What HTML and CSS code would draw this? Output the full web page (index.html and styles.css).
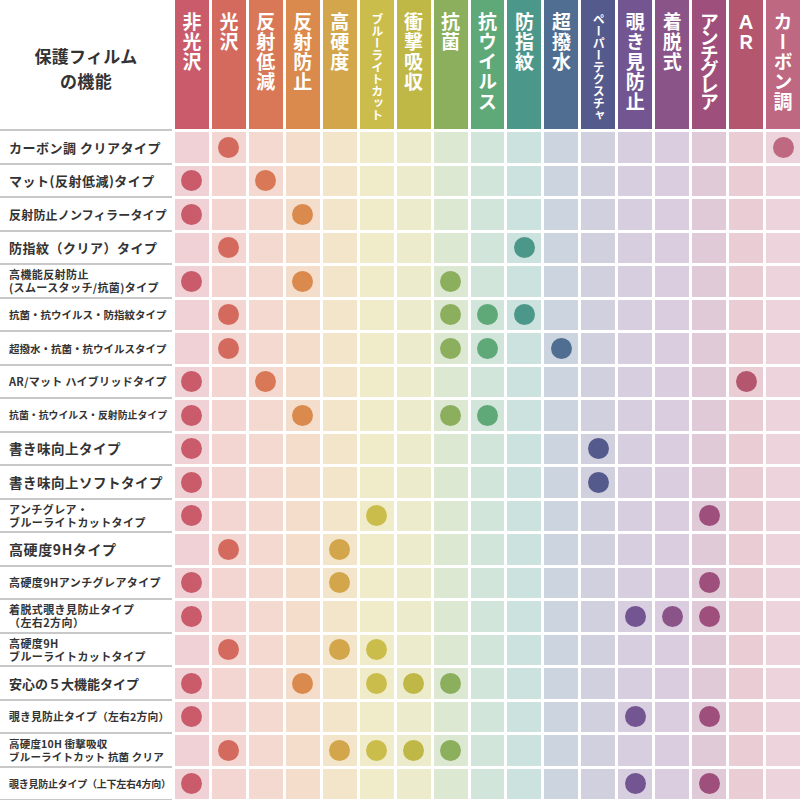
FILE: index.html
```html
<!DOCTYPE html>
<html lang="ja">
<head>
<meta charset="utf-8">
<title>保護フィルムの機能</title>
<link rel="stylesheet" href="styles.css">
</head>
<body>
<div class="chart">
  <div class="corner">保護フィルム<br>の機能</div>
  <div class="head c1"><span class="vt">非光沢</span></div>
  <div class="head c2"><span class="vt">光沢</span></div>
  <div class="head c3"><span class="vt">反射低減</span></div>
  <div class="head c4"><span class="vt">反射防止</span></div>
  <div class="head c5"><span class="vt">高硬度</span></div>
  <div class="head c6"><span class="vt small">ブルーライトカット</span></div>
  <div class="head c7"><span class="vt">衝撃吸収</span></div>
  <div class="head c8"><span class="vt">抗菌</span></div>
  <div class="head c9"><span class="vt">抗ウイルス</span></div>
  <div class="head c10"><span class="vt">防指紋</span></div>
  <div class="head c11"><span class="vt">超撥水</span></div>
  <div class="head c12"><span class="vt small">ペーパーテクスチャ</span></div>
  <div class="head c13"><span class="vt">覗き見防止</span></div>
  <div class="head c14"><span class="vt">着脱式</span></div>
  <div class="head c15"><span class="vt tight">アンチグレア</span></div>
  <div class="head c16"><span class="vt">ＡＲ</span></div>
  <div class="head c17"><span class="vt">カーボン調</span></div>

  <div class="label lg">カーボン調 クリアタイプ</div>
  <div class="cell c1"></div><div class="cell c2"><i class="dot"></i></div><div class="cell c3"></div><div class="cell c4"></div><div class="cell c5"></div><div class="cell c6"></div><div class="cell c7"></div><div class="cell c8"></div><div class="cell c9"></div><div class="cell c10"></div><div class="cell c11"></div><div class="cell c12"></div><div class="cell c13"></div><div class="cell c14"></div><div class="cell c15"></div><div class="cell c16"></div><div class="cell c17"><i class="dot"></i></div>

  <div class="label lg">マット(反射低減)タイプ</div>
  <div class="cell c1"><i class="dot"></i></div><div class="cell c2"></div><div class="cell c3"><i class="dot"></i></div><div class="cell c4"></div><div class="cell c5"></div><div class="cell c6"></div><div class="cell c7"></div><div class="cell c8"></div><div class="cell c9"></div><div class="cell c10"></div><div class="cell c11"></div><div class="cell c12"></div><div class="cell c13"></div><div class="cell c14"></div><div class="cell c15"></div><div class="cell c16"></div><div class="cell c17"></div>

  <div class="label md">反射防止ノンフィラータイプ</div>
  <div class="cell c1"><i class="dot"></i></div><div class="cell c2"></div><div class="cell c3"></div><div class="cell c4"><i class="dot"></i></div><div class="cell c5"></div><div class="cell c6"></div><div class="cell c7"></div><div class="cell c8"></div><div class="cell c9"></div><div class="cell c10"></div><div class="cell c11"></div><div class="cell c12"></div><div class="cell c13"></div><div class="cell c14"></div><div class="cell c15"></div><div class="cell c16"></div><div class="cell c17"></div>

  <div class="label lg">防指紋（クリア）タイプ</div>
  <div class="cell c1"></div><div class="cell c2"><i class="dot"></i></div><div class="cell c3"></div><div class="cell c4"></div><div class="cell c5"></div><div class="cell c6"></div><div class="cell c7"></div><div class="cell c8"></div><div class="cell c9"></div><div class="cell c10"><i class="dot"></i></div><div class="cell c11"></div><div class="cell c12"></div><div class="cell c13"></div><div class="cell c14"></div><div class="cell c15"></div><div class="cell c16"></div><div class="cell c17"></div>

  <div class="label sm">高機能反射防止<br>(スムースタッチ/抗菌)タイプ</div>
  <div class="cell c1"><i class="dot"></i></div><div class="cell c2"></div><div class="cell c3"></div><div class="cell c4"><i class="dot"></i></div><div class="cell c5"></div><div class="cell c6"></div><div class="cell c7"></div><div class="cell c8"><i class="dot"></i></div><div class="cell c9"></div><div class="cell c10"></div><div class="cell c11"></div><div class="cell c12"></div><div class="cell c13"></div><div class="cell c14"></div><div class="cell c15"></div><div class="cell c16"></div><div class="cell c17"></div>

  <div class="label xs">抗菌・抗ウイルス・防指紋タイプ</div>
  <div class="cell c1"></div><div class="cell c2"><i class="dot"></i></div><div class="cell c3"></div><div class="cell c4"></div><div class="cell c5"></div><div class="cell c6"></div><div class="cell c7"></div><div class="cell c8"><i class="dot"></i></div><div class="cell c9"><i class="dot"></i></div><div class="cell c10"><i class="dot"></i></div><div class="cell c11"></div><div class="cell c12"></div><div class="cell c13"></div><div class="cell c14"></div><div class="cell c15"></div><div class="cell c16"></div><div class="cell c17"></div>

  <div class="label xs">超撥水・抗菌・抗ウイルスタイプ</div>
  <div class="cell c1"></div><div class="cell c2"><i class="dot"></i></div><div class="cell c3"></div><div class="cell c4"></div><div class="cell c5"></div><div class="cell c6"></div><div class="cell c7"></div><div class="cell c8"><i class="dot"></i></div><div class="cell c9"><i class="dot"></i></div><div class="cell c10"></div><div class="cell c11"><i class="dot"></i></div><div class="cell c12"></div><div class="cell c13"></div><div class="cell c14"></div><div class="cell c15"></div><div class="cell c16"></div><div class="cell c17"></div>

  <div class="label md2">AR/マット ハイブリッドタイプ</div>
  <div class="cell c1"><i class="dot"></i></div><div class="cell c2"></div><div class="cell c3"><i class="dot"></i></div><div class="cell c4"></div><div class="cell c5"></div><div class="cell c6"></div><div class="cell c7"></div><div class="cell c8"></div><div class="cell c9"></div><div class="cell c10"></div><div class="cell c11"></div><div class="cell c12"></div><div class="cell c13"></div><div class="cell c14"></div><div class="cell c15"></div><div class="cell c16"><i class="dot"></i></div><div class="cell c17"></div>

  <div class="label xxs">抗菌・抗ウイルス・反射防止タイプ</div>
  <div class="cell c1"><i class="dot"></i></div><div class="cell c2"></div><div class="cell c3"></div><div class="cell c4"><i class="dot"></i></div><div class="cell c5"></div><div class="cell c6"></div><div class="cell c7"></div><div class="cell c8"><i class="dot"></i></div><div class="cell c9"><i class="dot"></i></div><div class="cell c10"></div><div class="cell c11"></div><div class="cell c12"></div><div class="cell c13"></div><div class="cell c14"></div><div class="cell c15"></div><div class="cell c16"></div><div class="cell c17"></div>

  <div class="label xl">書き味向上タイプ</div>
  <div class="cell c1"><i class="dot"></i></div><div class="cell c2"></div><div class="cell c3"></div><div class="cell c4"></div><div class="cell c5"></div><div class="cell c6"></div><div class="cell c7"></div><div class="cell c8"></div><div class="cell c9"></div><div class="cell c10"></div><div class="cell c11"></div><div class="cell c12"><i class="dot"></i></div><div class="cell c13"></div><div class="cell c14"></div><div class="cell c15"></div><div class="cell c16"></div><div class="cell c17"></div>

  <div class="label xl">書き味向上ソフトタイプ</div>
  <div class="cell c1"><i class="dot"></i></div><div class="cell c2"></div><div class="cell c3"></div><div class="cell c4"></div><div class="cell c5"></div><div class="cell c6"></div><div class="cell c7"></div><div class="cell c8"></div><div class="cell c9"></div><div class="cell c10"></div><div class="cell c11"></div><div class="cell c12"><i class="dot"></i></div><div class="cell c13"></div><div class="cell c14"></div><div class="cell c15"></div><div class="cell c16"></div><div class="cell c17"></div>

  <div class="label sm">アンチグレア・<br>ブルーライトカットタイプ</div>
  <div class="cell c1"><i class="dot"></i></div><div class="cell c2"></div><div class="cell c3"></div><div class="cell c4"></div><div class="cell c5"></div><div class="cell c6"><i class="dot"></i></div><div class="cell c7"></div><div class="cell c8"></div><div class="cell c9"></div><div class="cell c10"></div><div class="cell c11"></div><div class="cell c12"></div><div class="cell c13"></div><div class="cell c14"></div><div class="cell c15"><i class="dot"></i></div><div class="cell c16"></div><div class="cell c17"></div>

  <div class="label xl2">高硬度9Hタイプ</div>
  <div class="cell c1"></div><div class="cell c2"><i class="dot"></i></div><div class="cell c3"></div><div class="cell c4"></div><div class="cell c5"><i class="dot"></i></div><div class="cell c6"></div><div class="cell c7"></div><div class="cell c8"></div><div class="cell c9"></div><div class="cell c10"></div><div class="cell c11"></div><div class="cell c12"></div><div class="cell c13"></div><div class="cell c14"></div><div class="cell c15"></div><div class="cell c16"></div><div class="cell c17"></div>

  <div class="label sm">高硬度9Hアンチグレアタイプ</div>
  <div class="cell c1"><i class="dot"></i></div><div class="cell c2"></div><div class="cell c3"></div><div class="cell c4"></div><div class="cell c5"><i class="dot"></i></div><div class="cell c6"></div><div class="cell c7"></div><div class="cell c8"></div><div class="cell c9"></div><div class="cell c10"></div><div class="cell c11"></div><div class="cell c12"></div><div class="cell c13"></div><div class="cell c14"></div><div class="cell c15"><i class="dot"></i></div><div class="cell c16"></div><div class="cell c17"></div>

  <div class="label sm">着脱式覗き見防止タイプ<br>（左右2方向）</div>
  <div class="cell c1"><i class="dot"></i></div><div class="cell c2"></div><div class="cell c3"></div><div class="cell c4"></div><div class="cell c5"></div><div class="cell c6"></div><div class="cell c7"></div><div class="cell c8"></div><div class="cell c9"></div><div class="cell c10"></div><div class="cell c11"></div><div class="cell c12"></div><div class="cell c13"><i class="dot"></i></div><div class="cell c14"><i class="dot"></i></div><div class="cell c15"><i class="dot"></i></div><div class="cell c16"></div><div class="cell c17"></div>

  <div class="label sm">高硬度9H<br>ブルーライトカットタイプ</div>
  <div class="cell c1"></div><div class="cell c2"><i class="dot"></i></div><div class="cell c3"></div><div class="cell c4"></div><div class="cell c5"><i class="dot"></i></div><div class="cell c6"><i class="dot"></i></div><div class="cell c7"></div><div class="cell c8"></div><div class="cell c9"></div><div class="cell c10"></div><div class="cell c11"></div><div class="cell c12"></div><div class="cell c13"></div><div class="cell c14"></div><div class="cell c15"></div><div class="cell c16"></div><div class="cell c17"></div>

  <div class="label mdl">安心の５大機能タイプ</div>
  <div class="cell c1"><i class="dot"></i></div><div class="cell c2"></div><div class="cell c3"></div><div class="cell c4"><i class="dot"></i></div><div class="cell c5"></div><div class="cell c6"><i class="dot"></i></div><div class="cell c7"><i class="dot"></i></div><div class="cell c8"><i class="dot"></i></div><div class="cell c9"></div><div class="cell c10"></div><div class="cell c11"></div><div class="cell c12"></div><div class="cell c13"></div><div class="cell c14"></div><div class="cell c15"></div><div class="cell c16"></div><div class="cell c17"></div>

  <div class="label sm2">覗き見防止タイプ（左右2方向）</div>
  <div class="cell c1"><i class="dot"></i></div><div class="cell c2"></div><div class="cell c3"></div><div class="cell c4"></div><div class="cell c5"></div><div class="cell c6"></div><div class="cell c7"></div><div class="cell c8"></div><div class="cell c9"></div><div class="cell c10"></div><div class="cell c11"></div><div class="cell c12"></div><div class="cell c13"><i class="dot"></i></div><div class="cell c14"></div><div class="cell c15"><i class="dot"></i></div><div class="cell c16"></div><div class="cell c17"></div>

  <div class="label sm3">高硬度10H 衝撃吸収<br>ブルーライトカット 抗菌 クリア</div>
  <div class="cell c1"></div><div class="cell c2"><i class="dot"></i></div><div class="cell c3"></div><div class="cell c4"></div><div class="cell c5"><i class="dot"></i></div><div class="cell c6"><i class="dot"></i></div><div class="cell c7"><i class="dot"></i></div><div class="cell c8"><i class="dot"></i></div><div class="cell c9"></div><div class="cell c10"></div><div class="cell c11"></div><div class="cell c12"></div><div class="cell c13"></div><div class="cell c14"></div><div class="cell c15"></div><div class="cell c16"></div><div class="cell c17"></div>

  <div class="label xxs2">覗き見防止タイプ（上下左右4方向）</div>
  <div class="cell c1"><i class="dot"></i></div><div class="cell c2"></div><div class="cell c3"></div><div class="cell c4"></div><div class="cell c5"></div><div class="cell c6"></div><div class="cell c7"></div><div class="cell c8"></div><div class="cell c9"></div><div class="cell c10"></div><div class="cell c11"></div><div class="cell c12"></div><div class="cell c13"><i class="dot"></i></div><div class="cell c14"></div><div class="cell c15"><i class="dot"></i></div><div class="cell c16"></div><div class="cell c17"></div>
</div>
</body>
</html>
```

FILE: styles.css
```css
html, body {
  margin: 0;
  padding: 0;
  background: #fff;
}

body {
  width: 800px;
  height: 800px;
  overflow: hidden;
  font-family: "Noto Sans CJK JP", "Noto Sans", sans-serif;
  color: #333;
}

.chart {
  display: grid;
  grid-template-columns: 172px repeat(17, 1fr);
  grid-template-rows: 129px;
  grid-auto-rows: 30.5px;
  column-gap: 3px;
  row-gap: 3px;
  width: 800px;
}

.corner {
  display: flex;
  align-items: center;
  justify-content: center;
  text-align: center;
  font-size: 17px;
  font-weight: 700;
  line-height: 25px;
  letter-spacing: 0.3px;
  padding-top: 6px;
  box-shadow: 0 2px 0 #c8c8c8;
}

.head {
  display: flex;
  justify-content: center;
  align-items: flex-start;
  background: var(--hd);
}

.vt {
  writing-mode: vertical-rl;
  text-orientation: upright;
  color: #fff;
  font-size: 19px;
  font-weight: 700;
  letter-spacing: 1px;
  line-height: 1;
  padding-top: 12px;
}

.vt.small {
  font-size: 12px;
  letter-spacing: 0;
  padding-top: 13px;
}

.vt.tight {
  letter-spacing: -3px;
}

.label {
  display: flex;
  align-items: center;
  padding-left: 9px;
  font-weight: 700;
  white-space: nowrap;
  line-height: 13px;
  box-shadow: 0 2px 0 #c8c8c8;
}

.label.xl {
  font-size: 13.5px;
  letter-spacing: 0.5px;
}

.label.xl2 {
  font-size: 14px;
  letter-spacing: 0.6px;
}

.label.lg {
  font-size: 13px;
  letter-spacing: 0.5px;
}

.label.md {
  font-size: 12px;
  letter-spacing: 0.2px;
}

.label.md2 {
  font-size: 11px;
  letter-spacing: 0.3px;
}

.label.mdl {
  font-size: 13px;
  letter-spacing: 0;
}

.label.sm {
  font-size: 11px;
  letter-spacing: 0.4px;
}

.label.sm2 {
  font-size: 10.8px;
  letter-spacing: 0.2px;
}

.label.sm3 {
  font-size: 10.5px;
  letter-spacing: 0.2px;
}

.label.xs {
  font-size: 10.5px;
  letter-spacing: 0;
}

.label.xxs {
  font-size: 9.9px;
  letter-spacing: 0;
}

.label.xxs2 {
  font-size: 10px;
  letter-spacing: -0.25px;
}

.cell {
  display: flex;
  align-items: center;
  justify-content: center;
  background: var(--bg);
}

.dot {
  display: block;
  width: 21px;
  height: 21px;
  border-radius: 50%;
  background: var(--hd);
}

.c1  { --hd: #c95b6a; --bg: #f0d2d6; }
.c2  { --hd: #d4695e; --bg: #f3d5d1; }
.c3  { --hd: #d97856; --bg: #f4d9d0; }
.c4  { --hd: #da8a4c; --bg: #f5ddcc; }
.c5  { --hd: #d3a64b; --bg: #f3e5ca; }
.c6  { --hd: #cbbd4b; --bg: #f0ecca; }
.c7  { --hd: #bfb746; --bg: #ecebcb; }
.c8  { --hd: #8baf5c; --bg: #dde8d3; }
.c9  { --hd: #5fa878; --bg: #d2e5da; }
.c10 { --hd: #4b978a; --bg: #cce2de; }
.c11 { --hd: #506e91; --bg: #ccd5df; }
.c12 { --hd: #555a8c; --bg: #d0d0df; }
.c13 { --hd: #735592; --bg: #d7cee0; }
.c14 { --hd: #8a5488; --bg: #dbcde0; }
.c15 { --hd: #9e4f7c; --bg: #e1cad8; }
.c16 { --hd: #b4566e; --bg: #eacdd4; }
.c17 { --hd: #be6882; --bg: #ecd3dc; }
```
